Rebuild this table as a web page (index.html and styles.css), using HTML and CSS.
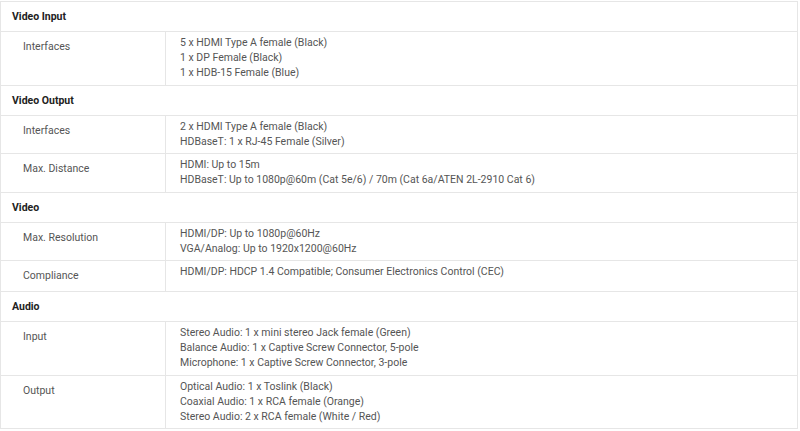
FILE: index.html
```html
<!DOCTYPE html>
<html>
<head>
<meta charset="utf-8">
<link rel="stylesheet" href="styles.css">
</head>
<body>
<table class="spec">
  <colgroup><col class="col-label"><col class="col-value"></colgroup>
  <tbody>
    <tr class="group"><th colspan="2">Video Input</th></tr>
    <tr><td class="label">Interfaces</td><td class="value">5 x HDMI Type A female (Black)<br>1 x DP Female (Black)<br>1 x HDB-15 Female (Blue)</td></tr>
    <tr class="group"><th colspan="2">Video Output</th></tr>
    <tr><td class="label">Interfaces</td><td class="value">2 x HDMI Type A female (Black)<br>HDBaseT: 1 x RJ-45 Female (Silver)</td></tr>
    <tr><td class="label">Max. Distance</td><td class="value">HDMI: Up to 15m<br>HDBaseT: Up to 1080p@60m (Cat 5e/6) / 70m (Cat 6a/ATEN 2L-2910 Cat 6)</td></tr>
    <tr class="group"><th colspan="2">Video</th></tr>
    <tr><td class="label">Max. Resolution</td><td class="value">HDMI/DP: Up to 1080p@60Hz<br>VGA/Analog: Up to 1920x1200@60Hz</td></tr>
    <tr><td class="label">Compliance</td><td class="value">HDMI/DP: HDCP 1.4 Compatible; Consumer Electronics Control (CEC)</td></tr>
    <tr class="group"><th colspan="2">Audio</th></tr>
    <tr><td class="label">Input</td><td class="value">Stereo Audio: 1 x mini stereo Jack female (Green)<br>Balance Audio: 1 x Captive Screw Connector, 5-pole<br>Microphone: 1 x Captive Screw Connector, 3-pole</td></tr>
    <tr><td class="label">Output</td><td class="value">Optical Audio: 1 x Toslink (Black)<br>Coaxial Audio: 1 x RCA female (Orange)<br>Stereo Audio: 2 x RCA female (White / Red)</td></tr>
  </tbody>
</table>
</body>
</html>
```

FILE: styles.css
```css
html, body {
  margin: 0;
  padding: 0;
  background: #ffffff;
}
body {
  padding-top: 1px;
  font-family: Roboto, "Liberation Sans", sans-serif;
  font-size: 10.5px;
  line-height: 15px;
  color: #555555;
}
.spec {
  width: 798px;
  border-collapse: collapse;
  table-layout: fixed;
}
.col-label { width: 165px; }
.spec th,
.spec td {
  border: 1px solid #e6e6e6;
  vertical-align: top;
  text-align: left;
}
.group th {
  padding: 7px 10px 7px 11px;
  font-weight: 700;
  color: #222222;
}
.label {
  padding: 7px 10px 8px 22px;
}
.value {
  padding: 3px 15px 4.5px 14px;
}
```
